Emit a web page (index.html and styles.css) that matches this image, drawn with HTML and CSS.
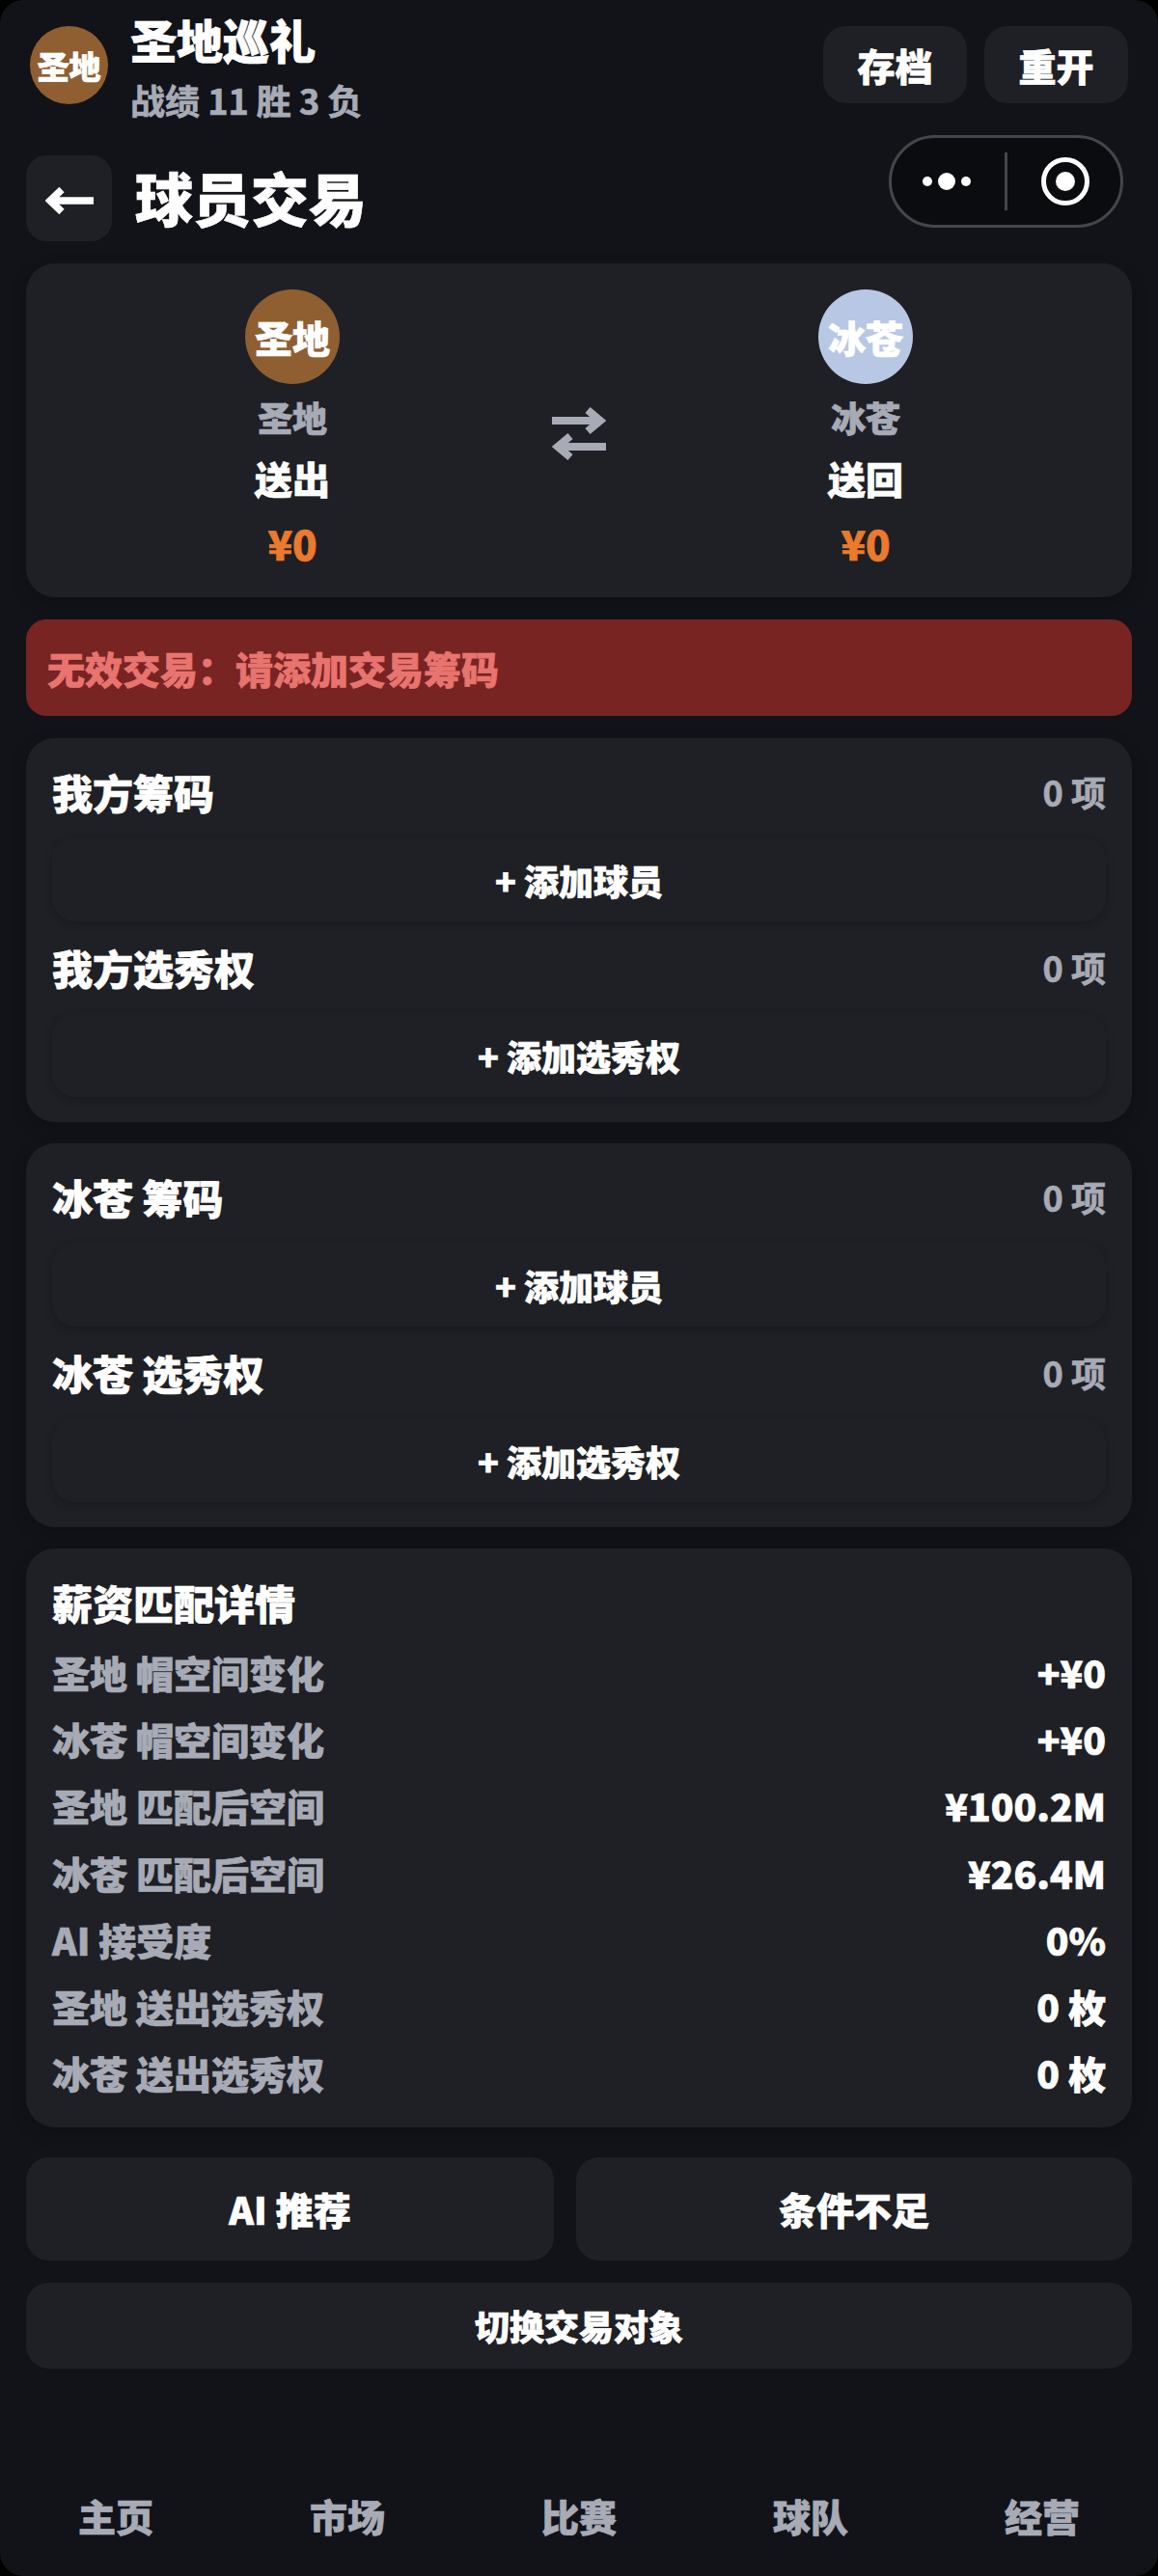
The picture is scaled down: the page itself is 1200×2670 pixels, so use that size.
FILE: index.html
```html
<!DOCTYPE html>
<html lang="zh-CN">
<head>
    <meta charset="UTF-8">
    <meta name="viewport" content="width=device-width, initial-scale=1.0">
    <title>球员交易</title>
    <link rel="stylesheet" href="styles.css">
</head>
<body>
    <div class="screen">
        <div class="topbar">
            <div class="logo-badge">圣地</div>
            <div class="topbar-info">
                <div class="topbar-title">圣地巡礼</div>
                <div class="topbar-sub">战绩 11 胜 3 负</div>
            </div>
            <div class="topbar-actions">
                <button class="btn-small">存档</button>
                <button class="btn-small">重开</button>
            </div>
        </div>

        <!-- mini program capsule -->
        <div class="capsule">
            <div class="capsule-dots">
                <span class="dot"></span>
                <span class="dot dot-big"></span>
                <span class="dot"></span>
            </div>
            <div class="capsule-line"></div>
            <svg class="capsule-target" width="50" height="50" viewBox="0 0 50 50">
                <circle cx="25" cy="25" r="22.5" fill="none" stroke="#fff" stroke-width="5"/>
                <circle cx="25" cy="25" r="10" fill="#fff"/>
            </svg>
        </div>

        <div class="page-head">
            <button class="back-btn">
                <svg width="50" height="28" viewBox="0 0 50 28">
                    <path d="M50 14H6M17 2.5L5 14l12 11.5" fill="none" stroke="#fff" stroke-width="7.5"/>
                </svg>
            </button>
            <h1 class="page-title">球员交易</h1>
        </div>

        <div class="card trade-card">
            <div class="trade-side">
                <div class="team-badge team-sd">圣地</div>
                <div class="team-name">圣地</div>
                <div class="team-label">送出</div>
                <div class="team-money">¥0</div>
            </div>
            <svg class="swap-icon" width="56" height="56" viewBox="0 0 56 56">
                <path d="M0 14H50M37 3l13 11-13 11" fill="none" stroke="#a7abb6" stroke-width="8"/>
                <path d="M56 41H6M19 30L6 41l13 11" fill="none" stroke="#a7abb6" stroke-width="8"/>
            </svg>
            <div class="trade-side">
                <div class="team-badge team-bc">冰苍</div>
                <div class="team-name">冰苍</div>
                <div class="team-label">送回</div>
                <div class="team-money">¥0</div>
            </div>
        </div>

        <div class="alert">无效交易：请添加交易筹码</div>

        <div class="card chip-card">
            <div class="chip-head">
                <span class="chip-title">我方筹码</span>
                <span class="chip-count">0 项</span>
            </div>
            <button class="add-btn">+ 添加球员</button>
            <div class="chip-head">
                <span class="chip-title">我方选秀权</span>
                <span class="chip-count">0 项</span>
            </div>
            <button class="add-btn">+ 添加选秀权</button>
        </div>

        <div class="card chip-card">
            <div class="chip-head">
                <span class="chip-title">冰苍 筹码</span>
                <span class="chip-count">0 项</span>
            </div>
            <button class="add-btn">+ 添加球员</button>
            <div class="chip-head">
                <span class="chip-title">冰苍 选秀权</span>
                <span class="chip-count">0 项</span>
            </div>
            <button class="add-btn">+ 添加选秀权</button>
        </div>

        <div class="card detail-card">
            <div class="detail-title">薪资匹配详情</div>
            <div class="detail-row"><span>圣地 帽空间变化</span><b>+¥0</b></div>
            <div class="detail-row"><span>冰苍 帽空间变化</span><b>+¥0</b></div>
            <div class="detail-row"><span>圣地 匹配后空间</span><b>¥100.2M</b></div>
            <div class="detail-row"><span>冰苍 匹配后空间</span><b>¥26.4M</b></div>
            <div class="detail-row"><span>AI 接受度</span><b>0%</b></div>
            <div class="detail-row"><span>圣地 送出选秀权</span><b>0 枚</b></div>
            <div class="detail-row"><span>冰苍 送出选秀权</span><b>0 枚</b></div>
        </div>

        <div class="action-row">
            <button class="btn-action btn-ai">AI 推荐</button>
            <button class="btn-action btn-cond">条件不足</button>
        </div>
        <button class="btn-switch">切换交易对象</button>

        <div class="tabbar">
            <div class="tab">主页</div>
            <div class="tab">市场</div>
            <div class="tab">比赛</div>
            <div class="tab">球队</div>
            <div class="tab">经营</div>
        </div>
    </div>
</body>
</html>
```

FILE: styles.css
```css
* {
    margin: 0;
    padding: 0;
    box-sizing: border-box;
    font-family: "Noto Sans CJK SC", "Noto Sans", sans-serif;
    font-weight: 900;
    -webkit-text-stroke: 0.7px currentColor;
}

body {
    background-color: #000;
    width: 1200px;
    height: 2670px;
    overflow: hidden;
}

button {
    border: none;
    color: #fff;
    cursor: pointer;
}

.screen {
    position: relative;
    width: 1200px;
    height: 2670px;
    padding: 0 27px;
    background-color: #111319;
    border-radius: 24px;
    overflow: hidden;
}

.topbar {
    display: flex;
    align-items: flex-start;
    height: 161px;
    padding: 27px 4px 0 4px;
}

.logo-badge {
    display: flex;
    align-items: center;
    justify-content: center;
    width: 81px;
    height: 81px;
    border-radius: 50%;
    background-color: #8f5f32;
    color: #fff;
    font-size: 33px;
}

.topbar-info {
    margin-left: 23px;
    margin-top: -19px;
}

.topbar-title {
    font-size: 48px;
    line-height: 64px;
    color: #fff;
}

.topbar-sub {
    margin-top: 6px;
    font-size: 36px;
    font-weight: 700;
    line-height: 50px;
    color: #a7abb6;
}

.topbar-actions {
    display: flex;
    gap: 18px;
    margin-left: auto;
}

.btn-small {
    width: 149px;
    height: 80px;
    border-radius: 24px;
    background-color: #1f2025;
    font-size: 39px;
}

.capsule {
    position: absolute;
    left: 921px;
    top: 140px;
    display: flex;
    align-items: center;
    width: 243px;
    height: 96px;
    border: 3px solid #45464b;
    border-radius: 48px;
    background-color: #0b0c0f;
}

.capsule-dots {
    display: flex;
    align-items: center;
    gap: 6px;
    margin-left: 32px;
}

.dot {
    width: 10px;
    height: 10px;
    border-radius: 50%;
    background-color: #fff;
}

.dot-big {
    width: 18px;
    height: 18px;
}

.capsule-line {
    width: 3px;
    height: 60px;
    margin-left: 35px;
    background-color: #45464b;
}

.capsule-target {
    margin-left: 35px;
}

.page-head {
    display: flex;
    align-items: center;
    height: 89px;
    margin-bottom: 23px;
}

.back-btn {
    display: flex;
    align-items: center;
    justify-content: center;
    width: 89px;
    height: 89px;
    padding-top: 5px;
    border-radius: 21px;
    background-color: #1f2025;
}

.page-title {
    margin-left: 24px;
    margin-top: -4px;
    font-size: 60px;
    line-height: 84px;
    color: #fff;
}

.card {
    background-color: #1f2025;
    border-radius: 30px;
    box-shadow: 0 6px 18px rgba(0, 0, 0, 0.2);
}

.trade-card {
    display: grid;
    grid-template-columns: 1fr 96px 1fr;
    align-items: center;
    height: 346px;
    padding: 27px 27px 24px;
    margin-bottom: 23px;
}

.swap-icon {
    justify-self: center;
    margin-top: 4px;
}

.trade-side {
    display: flex;
    flex-direction: column;
    align-items: center;
    align-self: start;
}

.team-badge {
    display: flex;
    align-items: center;
    justify-content: center;
    width: 98px;
    height: 98px;
    border-radius: 50%;
    color: #fff;
    font-size: 39px;
}

.team-sd {
    background-color: #8f5f32;
}

.team-bc {
    background-color: #b8c8e4;
}

.team-name {
    margin-top: 9px;
    font-size: 36px;
    line-height: 50px;
    color: #a7abb6;
}

.team-label {
    margin-top: 11px;
    font-size: 39px;
    line-height: 54px;
    color: #fff;
}

.team-money {
    margin-top: 12px;
    font-size: 42px;
    line-height: 58px;
    color: #ea7a2d;
}

.alert {
    height: 100px;
    padding: 0 22px;
    margin-bottom: 23px;
    border-radius: 21px;
    background-color: #772423;
    color: #e8746f;
    font-size: 39px;
    line-height: 100px;
}

.chip-card {
    height: 398px;
    padding: 25px 27px 0;
    margin-bottom: 22px;
}

.chip-head {
    display: flex;
    justify-content: space-between;
    align-items: center;
    height: 60px;
    margin-bottom: 18px;
}

.chip-title {
    font-size: 42px;
    color: #fff;
}

.chip-count {
    font-size: 36px;
    font-weight: 700;
    color: #a7abb6;
}

.add-btn {
    display: block;
    width: 100%;
    height: 87px;
    margin-bottom: 17px;
    border-radius: 24px;
    background-color: #1e2025;
    box-shadow: 0 3px 9px rgba(0, 0, 0, 0.22);
    font-size: 36px;
}

.detail-card {
    height: 600px;
    padding: 25px 27px 0;
    margin-bottom: 31px;
}

.detail-title {
    height: 62px;
    margin-bottom: 6px;
    font-size: 42px;
    line-height: 62px;
    color: #fff;
}

.detail-row {
    display: flex;
    justify-content: space-between;
    align-items: center;
    height: 69.3px;
    font-size: 39px;
}

.detail-row span {
    color: #a7abb6;
}

.detail-row b {
    color: #fff;
}

.action-row {
    display: flex;
    gap: 23px;
    margin-bottom: 23px;
}

.btn-action {
    height: 107px;
    padding-bottom: 2px;
    border-radius: 24px;
    background-color: #1f2025;
    font-size: 39px;
}

.btn-ai {
    width: 547px;
}

.btn-cond {
    flex: 1;
}

.btn-switch {
    display: block;
    width: 100%;
    height: 89px;
    padding-bottom: 2px;
    border-radius: 24px;
    background-color: #1f2025;
    font-size: 36px;
}

.tabbar {
    position: absolute;
    left: 0;
    right: 0;
    bottom: 26px;
    display: flex;
}

.tab {
    flex: 1;
    text-align: center;
    font-size: 39px;
    line-height: 74px;
    color: #a7abb6;
}
```
